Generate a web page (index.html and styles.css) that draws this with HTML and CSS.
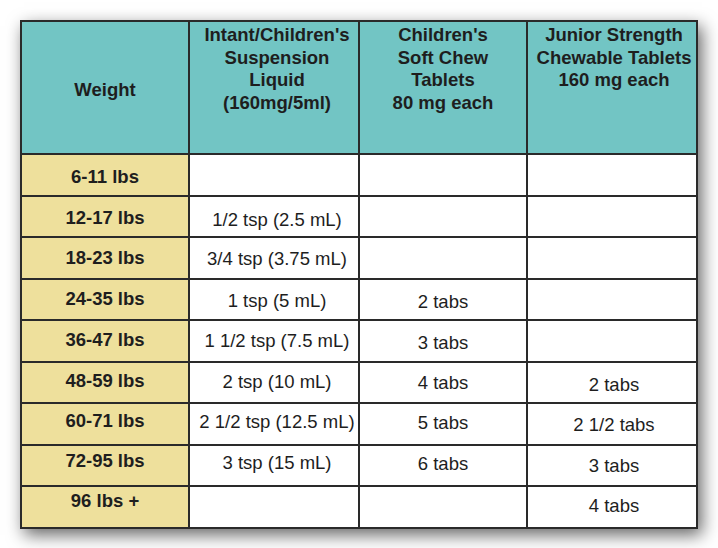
FILE: index.html
```html
<!DOCTYPE html>
<html lang="en">
<head>
<meta charset="utf-8">
<title>Dosage chart</title>
<link rel="stylesheet" href="styles.css">
</head>
<body>
<table class="dose">
  <thead>
    <tr class="head">
      <th class="c-w weight">Weight</th>
      <th class="c-l">Intant/Children's<br>Suspension<br>Liquid<br>(160mg/5ml)</th>
      <th class="c-c">Children's<br>Soft Chew<br>Tablets<br>80 mg each</th>
      <th class="c-j">Junior Strength<br>Chewable Tablets<br>160 mg each</th>
    </tr>
  </thead>
  <tbody>
    <tr><td class="c-w">6-11 lbs</td><td class="c-l"></td><td class="c-c"></td><td class="c-j"></td></tr>
    <tr><td class="c-w">12-17 lbs</td><td class="c-l">1/2 tsp (2.5 mL)</td><td class="c-c"></td><td class="c-j"></td></tr>
    <tr><td class="c-w">18-23 lbs</td><td class="c-l">3/4 tsp (3.75 mL)</td><td class="c-c"></td><td class="c-j"></td></tr>
    <tr><td class="c-w">24-35 lbs</td><td class="c-l">1 tsp (5 mL)</td><td class="c-c">2 tabs</td><td class="c-j"></td></tr>
    <tr><td class="c-w">36-47 lbs</td><td class="c-l">1 1/2 tsp (7.5 mL)</td><td class="c-c">3 tabs</td><td class="c-j"></td></tr>
    <tr><td class="c-w">48-59 lbs</td><td class="c-l">2 tsp (10 mL)</td><td class="c-c">4 tabs</td><td class="c-j">2 tabs</td></tr>
    <tr><td class="c-w">60-71 lbs</td><td class="c-l">2 1/2 tsp (12.5 mL)</td><td class="c-c">5 tabs</td><td class="c-j">2 1/2 tabs</td></tr>
    <tr><td class="c-w">72-95 lbs</td><td class="c-l">3 tsp (15 mL)</td><td class="c-c">6 tabs</td><td class="c-j">3 tabs</td></tr>
    <tr><td class="c-w">96 lbs +</td><td class="c-l"></td><td class="c-c"></td><td class="c-j">4 tabs</td></tr>
  </tbody>
</table>
</body>
</html>
```
FILE: styles.css
```css
html, body {
  margin: 0;
  padding: 0;
  background: #ffffff;
}

body {
  padding: 20px;
  font-family: "Liberation Sans", Arial, sans-serif;
  color: #1e1e1e;
}

.dose {
  table-layout: fixed;
  width: 678px;
  border-collapse: separate;
  border-spacing: 0;
  border-top: 2px solid #2a2a2a;
  border-left: 2px solid #2a2a2a;
  box-shadow: 4px 6px 16px rgba(0, 0, 0, 0.6);
  background: #ffffff;
}

.dose th,
.dose td {
  box-sizing: border-box;
  border-right: 2px solid #2a2a2a;
  border-bottom: 2px solid #2a2a2a;
  text-align: center;
  font-size: 18.5px;
  padding: 0;
}

.dose .c-w { width: 168px; }
.dose .c-l { width: 170px; padding-left: 6px; }
.dose .c-c { width: 168px; }
.dose .c-j { width: 170px; padding-left: 4px; }

/* header */
.head { height: 133px; }

.dose th {
  background: #72c5c4;
  font-weight: bold;
  line-height: 22.6px;
  vertical-align: top;
  padding-top: 2px;
  white-space: nowrap;
}

.dose th.weight {
  vertical-align: middle;
  padding-top: 5px;
}

/* body rows */
.dose tbody tr {
  height: 41.5px;
  --r: 12px;
}
.dose tbody tr:nth-child(1) { --r: 11.9px; }
.dose tbody tr:nth-child(2) { --r: 11.9px; }
.dose tbody tr:nth-child(3) { --r: 10.2px; }
.dose tbody tr:nth-child(4) { --r: 9.9px; }
.dose tbody tr:nth-child(5) { --r: 9.2px; }
.dose tbody tr:nth-child(6) { --r: 8.2px; }
.dose tbody tr:nth-child(7) { --r: 6.5px; }
.dose tbody tr:nth-child(8) { --r: 5.9px; }
.dose tbody tr:nth-child(9) { --r: 4.2px; }

.dose td {
  --c: 0px;
  line-height: 20px;
  vertical-align: top;
  padding-top: calc(var(--r) + var(--c));
  background: #ffffff;
  white-space: nowrap;
}

.dose td.c-w {
  background: #eee09c;
  font-weight: bold;
}
.dose td.c-l { --c: 1.2px; }
.dose td.c-c { --c: 2.3px; }
.dose td.c-j { --c: 4.7px; }
```
